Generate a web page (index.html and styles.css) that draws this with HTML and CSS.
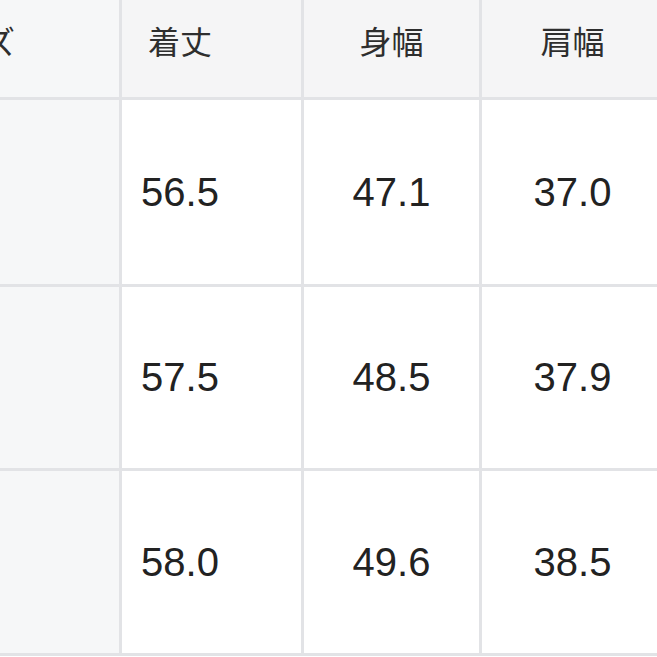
FILE: index.html
```html
<!DOCTYPE html>
<html lang="ja">
<head>
<meta charset="utf-8">
<link rel="stylesheet" href="styles.css">
</head>
<body>
<div class="table">
  <div class="cell head side"><span>サイズ</span></div>
  <div class="cell head c1">着丈</div>
  <div class="cell head">身幅</div>
  <div class="cell head">肩幅</div>

  <div class="cell side"></div>
  <div class="cell num c1">56.5</div>
  <div class="cell num">47.1</div>
  <div class="cell num">37.0</div>

  <div class="cell side"></div>
  <div class="cell num c1">57.5</div>
  <div class="cell num">48.5</div>
  <div class="cell num">37.9</div>

  <div class="cell side"></div>
  <div class="cell num c1">58.0</div>
  <div class="cell num">49.6</div>
  <div class="cell num">38.5</div>
</div>
</body>
</html>
```
FILE: styles.css
```css
html, body {
  margin: 0;
  padding: 0;
  background: #ffffff;
  width: 657px;
  height: 657px;
  overflow: hidden;
}

.table {
  display: grid;
  grid-template-columns: 119px 179px 175px 1fr;
  grid-template-rows: 97px 184px 181px 182px;
  gap: 3px;
  padding-bottom: 3px;
  background: #e2e3e6;
  width: 663px;
}

.cell {
  background: #ffffff;
  display: flex;
  align-items: center;
  justify-content: center;
  overflow: hidden;
  white-space: nowrap;
}

.head {
  background: #f5f5f6;
  font-family: "Noto Sans CJK JP", "Noto Sans", sans-serif;
  font-size: 32px;
  color: #2e2e2e;
  padding-bottom: 18px;
  box-sizing: border-box;
}

.side {
  background: #f6f7f8;
}

.head.side {
  justify-content: flex-end;
  padding-right: 104px;
}

.num {
  font-family: "Liberation Sans", Arial, sans-serif;
  font-size: 40px;
  color: #222222;
}

.c1 {
  padding-right: 63px;
  box-sizing: border-box;
}
```
